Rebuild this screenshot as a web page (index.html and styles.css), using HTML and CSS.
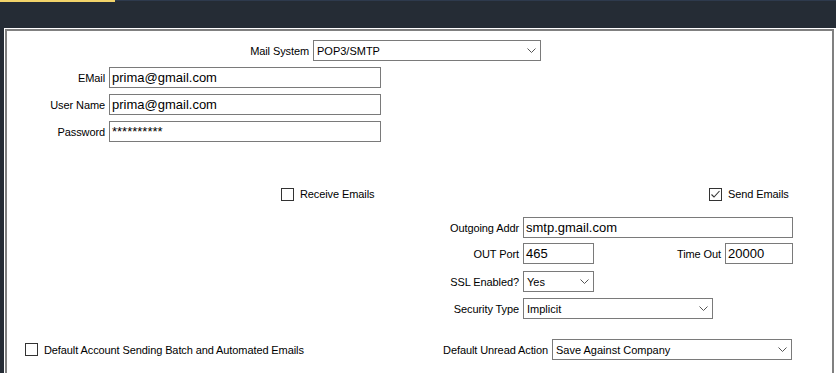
FILE: index.html
```html
<!DOCTYPE html>
<html lang="en">
<head>
<meta charset="UTF-8">
<title>Mail Settings</title>
<link rel="stylesheet" href="styles.css">
</head>
<body>

<div class="titlebar">
    <div class="accent"></div>
</div>

<div class="page">
    <div class="frame">

        <div class="row row-mail">
            <span class="lbl lbl-mail">Mail System</span>
            <div class="combo combo-mail"><span>POP3/SMTP</span><svg width="9" height="5" viewBox="0 0 9 5"><path d="M0.5 0.5 L4.5 4.5 L8.5 0.5" fill="none" stroke="#555" stroke-width="1"/></svg></div>
        </div>

        <div class="row row-account">
            <span class="lbl lbl-account">EMail</span>
            <div class="textbox tb-account">prima@gmail.com</div>
        </div>
        <div class="row row-account">
            <span class="lbl lbl-account">User Name</span>
            <div class="textbox tb-account">prima@gmail.com</div>
        </div>
        <div class="row row-account">
            <span class="lbl lbl-account">Password</span>
            <div class="textbox tb-account">**********</div>
        </div>

        <div class="row row-checks">
            <span></span>
            <div class="check"><span class="box"></span>Receive Emails</div>
            <div class="check"><span class="box"><svg width="11" height="11" viewBox="0 0 11 11"><path d="M1.5 5.5 L4 8 L9.5 2" fill="none" stroke="#333" stroke-width="1.1"/></svg></span>Send Emails</div>
        </div>

        <div class="row row-out row-addr">
            <span class="lbl lbl-out">Outgoing Addr</span>
            <div class="textbox tb-addr">smtp.gmail.com</div>
        </div>
        <div class="row row-out row-port">
            <span class="lbl lbl-out">OUT Port</span>
            <div class="textbox tb-port">465</div>
            <span class="lbl lbl-timeout">Time Out</span>
            <div class="textbox tb-timeout">20000</div>
        </div>
        <div class="row row-out row-ssl">
            <span class="lbl lbl-out">SSL Enabled?</span>
            <div class="combo combo-ssl"><span>Yes</span><svg width="9" height="5" viewBox="0 0 9 5"><path d="M0.5 0.5 L4.5 4.5 L8.5 0.5" fill="none" stroke="#555" stroke-width="1"/></svg></div>
        </div>
        <div class="row row-out row-sec">
            <span class="lbl lbl-out">Security Type</span>
            <div class="combo combo-sec"><span>Implicit</span><svg width="9" height="5" viewBox="0 0 9 5"><path d="M0.5 0.5 L4.5 4.5 L8.5 0.5" fill="none" stroke="#555" stroke-width="1"/></svg></div>
        </div>

        <div class="row row-bottom">
            <div class="check check-default"><span class="box"></span>Default Account Sending Batch and Automated Emails</div>
            <span class="lbl">Default Unread Action</span>
            <div class="combo combo-unread"><span>Save Against Company</span><svg width="9" height="5" viewBox="0 0 9 5"><path d="M0.5 0.5 L4.5 4.5 L8.5 0.5" fill="none" stroke="#555" stroke-width="1"/></svg></div>
        </div>

    </div>
</div>

</body>
</html>
```

FILE: styles.css
```css
body {
    margin: 0;
    padding: 0;
    font-family: "Liberation Sans", Arial, sans-serif;
    font-size: 11px;
    color: #000;
    background-color: #fff;
    height: 373px;
    overflow: hidden;
}
.titlebar {
    height: 28px;
    background-color: #252c35;
    border-top: 1px solid #2e3a4d;
    box-sizing: border-box;
}
.accent {
    width: 115px;
    height: 2px;
    margin-top: -1px;
    background-color: #f2d46a;
}
.page {
    border-left: 4px solid #252c35;
    padding: 1px 2px 0 1px;
}
.frame {
    border: 2px solid #808080;
    border-bottom: none;
    height: 340px;
    padding-top: 9px;
}
.row {
    display: flex;
    align-items: center;
    height: 21px;
}
.lbl {
    display: block;
    text-align: right;
    margin-right: 4px;
    white-space: nowrap;
    letter-spacing: -0.1px;
}
.textbox,
.combo {
    box-sizing: border-box;
    height: 21px;
    border: 1px solid #7a7a7a;
    background-color: #fff;
}
.textbox {
    font-size: 13px;
    line-height: 19px;
    padding-left: 2px;
}
.combo {
    display: flex;
    align-items: center;
    justify-content: space-between;
    padding: 0 4px 0 3px;
    font-size: 11px;
}
.combo svg {
    display: block;
}

/* mail system */
.row-mail .lbl-mail {
    width: 302px;
}
.combo-mail {
    width: 228px;
}

/* account */
.row-account {
    margin-top: 6px;
}
.lbl-account {
    width: 98px;
}
.tb-account {
    width: 272px;
}

/* checkboxes */
.row-checks {
    display: grid;
    grid-template-columns: 274px 428px auto;
    height: 14px;
    margin-top: 45px;
}
.check {
    display: flex;
    align-items: center;
    white-space: nowrap;
    letter-spacing: -0.1px;
}
.check .box {
    box-sizing: border-box;
    width: 13px;
    height: 13px;
    border: 1px solid #333;
    background-color: #fff;
    margin-right: 6px;
    display: flex;
    align-items: center;
    justify-content: center;
}

/* outgoing */
.lbl-out {
    width: 512px;
}
.row-addr {
    margin-top: 16px;
}
.tb-addr {
    width: 270px;
}
.row-port {
    margin-top: 5px;
}
.tb-port {
    width: 71px;
}
.lbl-timeout {
    width: 127px;
}
.tb-timeout {
    width: 68px;
}
.row-ssl {
    margin-top: 7px;
}
.combo-ssl {
    width: 71px;
}
.row-sec {
    margin-top: 6px;
}
.combo-sec {
    width: 190px;
}

/* bottom */
.row-bottom {
    display: grid;
    grid-template-columns: 318px 227px 240px;
    align-items: center;
    margin-top: 20px;
}
.check-default {
    padding-left: 18px;
}
.combo-unread {
    width: 240px;
}
```
